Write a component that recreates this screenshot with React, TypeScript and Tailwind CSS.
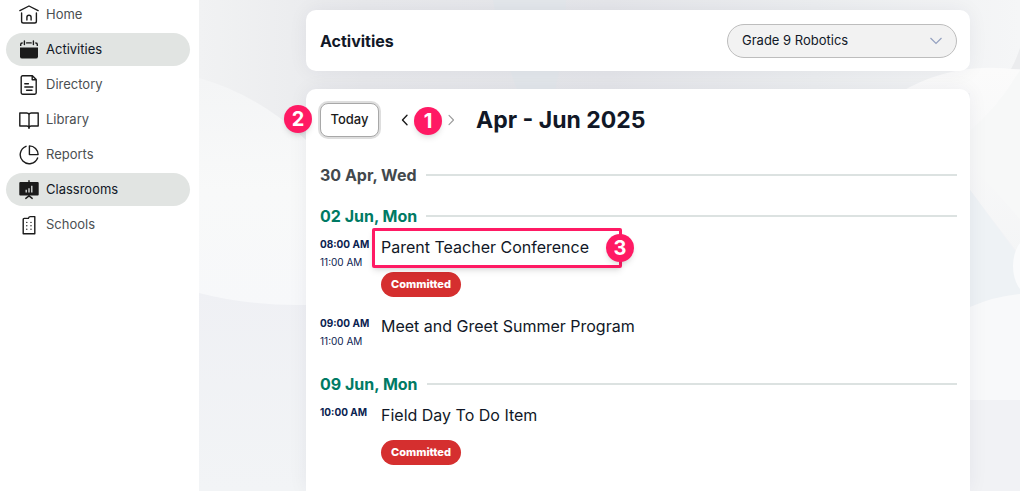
import type { ReactNode } from "react";

type NavItem = { label: string; active?: boolean; icon: ReactNode };
type Event = { start: string; end?: string; title: string; status?: string; marker?: string };
type Day = { date: string; upcoming?: boolean; events: Event[] };

const stroke = {
  fill: "none",
  stroke: "currentColor",
  strokeWidth: 1.4,
  strokeLinecap: "round" as const,
  strokeLinejoin: "round" as const,
};

function Glyph({ children }: { children: ReactNode }) {
  return (
    <svg viewBox="0 0 20 20" className="size-5 shrink-0 text-[#1b1b1b]" aria-hidden="true" {...stroke}>
      {children}
    </svg>
  );
}

const nav: NavItem[] = [
  {
    label: "Home",
    icon: (
      <Glyph>
        <path d="M.9 5.600 10 1l9.100 4.600M2.600 8v8.200A1.800 1.800 0 0 0 4.400 18h11.200a1.800 1.800 0 0 0 1.800-1.800V8M7.900 15v-2.600a2.100 2.100 0 0 1 4.200 0V15" />
      </Glyph>
    ),
  },
  {
    label: "Activities",
    active: true,
    icon: (
      <Glyph>
        <path d="M1 7.400h18v9a2.200 2.200 0 0 1-2.200 2.200H3.200A2.200 2.200 0 0 1 1 16.400z" fill="currentColor" stroke="none" />
        <path d="M1.700 5.400V4.600c0-1 .6-1.600 1.500-1.600M18.300 5.400V4.600c0-1-.6-1.600-1.500-1.600M5.400 1v3.600M14.400 1v3.600M7.600 2.900h4.600" />
      </Glyph>
    ),
  },
  {
    label: "Directory",
    icon: (
      <Glyph>
        <path d="M13.400.8H3.600a1.400 1.400 0 0 0-1.400 1.400v15.600a1.400 1.400 0 0 0 1.400 1.400h12.200a1.400 1.400 0 0 0 1.400-1.400V4.600zM13.200 1v3.800h3.900M5.800 8.800h3.600M5.800 12h8M7.600 15.200h5.400" />
      </Glyph>
    ),
  },
  {
    label: "Library",
    icon: (
      <Glyph>
        <path d="M10 4.400C9.600 3.400 8.800 3 7.800 3H.8v13h7c1.200 0 2 .5 2.200 1.800.2-1.300 1-1.800 2.200-1.800h7V3h-7c-1 0-1.800.4-2.200 1.400zM10 4.400v14" />
      </Glyph>
    ),
  },
  {
    label: "Reports",
    icon: (
      <Glyph>
        <path d="M7 1.300A9 9 0 1 0 18.600 13M10.400.9v8.700h8.700A8.700 8.700 0 0 0 10.400.9z" />
      </Glyph>
    ),
  },
  {
    label: "Classrooms",
    active: true,
    icon: (
      <Glyph>
        <rect x="0.300" y="2" width="19.400" height="13.600" rx="1" fill="currentColor" stroke="none" />
        <path d="M10 .8v2M10 15v1.400M6.800 18.400 10 15.900l3.200 2.500" />
        <path d="M7.200 12.400V9.800M10 12.400V8.200M12.800 12.400V5.800" stroke="#e1e4e2" strokeWidth="1.300" strokeLinecap="butt" />
      </Glyph>
    ),
  },
  {
    label: "Schools",
    icon: (
      <Glyph>
        <path d="M4.200 18.800V4.400c0-.6.400-1 1-1h4.200c.3-1.200 1-1.800 2-1.800h4.400v17.200z" />
        <path d="M7.800 7.400h.01M12 7.400h.01M7.800 10.800h.01M12 10.800h.01M7.800 14.200h.01M12 14.200h.01" />
      </Glyph>
    ),
  },
];

const days: Day[] = [
  { date: "30 Apr, Wed", events: [] },
  {
    date: "02 Jun, Mon",
    upcoming: true,
    events: [
      { start: "08:00 AM", end: "11:00 AM", title: "Parent Teacher Conference", status: "Committed", marker: "3" },
      { start: "09:00 AM", end: "11:00 AM", title: "Meet and Greet Summer Program" },
    ],
  },
  {
    date: "09 Jun, Mon",
    upcoming: true,
    events: [{ start: "10:00 AM", title: "Field Day To Do Item", status: "Committed" }],
  },
];

function Marker({ children, className }: { children: ReactNode; className: string }) {
  return (
    <span
      className={`absolute z-10 flex size-7 items-center justify-center rounded-full bg-[#ff1a64] text-xl font-bold text-white shadow-md ${className}`}
    >
      {children}
    </span>
  );
}

function Backdrop() {
  return (
    <svg
      className="absolute inset-0 size-full"
      viewBox="0 0 821 491"
      preserveAspectRatio="none"
      aria-hidden="true"
    >
      <defs>
        <linearGradient id="base" x1="0" y1="0" x2="1" y2="0">
          <stop offset="0" stopColor="#f1f2f3" />
          <stop offset="0.200" stopColor="#e8e9ec" />
          <stop offset="0.500" stopColor="#e5e6ea" />
          <stop offset="0.750" stopColor="#eceef0" />
          <stop offset="1" stopColor="#f5f6f7" />
        </linearGradient>
        <linearGradient id="left" x1="0" y1="0" x2="0" y2="1">
          <stop offset="0" stopColor="#f4f5f6" />
          <stop offset="0.500" stopColor="#f8f9f9" />
          <stop offset="1" stopColor="#f7f8fa" />
        </linearGradient>
        <linearGradient id="lower" x1="0" y1="0" x2="0" y2="1">
          <stop offset="0" stopColor="#eff0f4" />
          <stop offset="1" stopColor="#f2f4f6" />
        </linearGradient>
        <linearGradient id="dome" x1="0" y1="0" x2="0" y2="1">
          <stop offset="0" stopColor="#fbfbfb" />
          <stop offset="1" stopColor="#f4f5f6" />
        </linearGradient>
      </defs>
      <rect width="821" height="491" fill="url(#base)" />
      <path d="M294 0q8 50 28 100h32q12-50 13-100z" fill="#e3e7eb" />
      <path d="M0 280h150v211H0z" fill="url(#lower)" />
      <path d="M0 78Q60 95 107 140V305Q50 306 0 293z" fill="url(#left)" />
      <path d="M771 90h50v401h-50z" fill="#f1f2f5" />
      <path d="M821 48q-4 12-9 21h9z" fill="#ebecee" />
      <path d="M700 93Q755 60 821 70v186l-50-66V93z" fill="url(#dome)" />
      <path d="M821 70Q800 106 771 131v32l50 56z" fill="#f7f8f8" />
      <path d="M771 190 821 258v36q-25 2-50 13z" fill="#eef2f5" />
      <path d="M771 307q25-11 50-13v106h-50z" fill="#f8f9fa" />
      <ellipse cx="832" cy="266" rx="18" ry="29" fill="#fafbfc" />
    </svg>
  );
}

function EventRow({ event }: { event: Event }) {
  return (
    <li className="flex">
      <div className="w-[61px] shrink-0 text-[10px] leading-[18px] whitespace-nowrap text-[#0b2250]">
        <p className="font-bold">{event.start}</p>
        {event.end && <p>{event.end}</p>}
      </div>
      <div>
        <h3 className="relative w-fit text-base leading-6 text-[#111827]">
          <a href="#event">{event.title}</a>
          {event.marker && (
            <>
              <span className="pointer-events-none absolute -top-[7px] -left-[9px] h-10 w-[250px] rounded-xs border-3 border-[#ff1a64] shadow-md" />
              <Marker className="-top-[1px] left-[225px]">{event.marker}</Marker>
            </>
          )}
        </h3>
        {event.status && (
          <span className="mt-[13px] flex h-[25px] w-20 items-center justify-center rounded-full bg-[#d52f2f] text-[11px] font-extrabold text-white">
            {event.status}
          </span>
        )}
      </div>
    </li>
  );
}

export default function App() {
  return (
    <div className="flex min-h-screen overflow-hidden bg-white font-['Inter',sans-serif]">
      <nav aria-label="Main" className="-mt-[2px] w-[199px] shrink-0 pr-[9px] pl-[6px]">
        <ul className="flex flex-col gap-[2px]">
          {nav.map((item) => (
            <li key={item.label}>
              <a
                href={`#${item.label.toLowerCase()}`}
                className={`flex h-[33px] items-center gap-[7px] rounded-full pl-[13px] text-[13px] ${
                  item.active ? "bg-[#e1e4e2] text-[#111827]" : "text-[#4b4f52]"
                }`}
              >
                {item.icon}
                {item.label}
              </a>
            </li>
          ))}
        </ul>
      </nav>

      <main className="relative flex flex-1 flex-col gap-[18px] pt-[10px] pr-[50px] pl-[107px]">
        <Backdrop />
        <header className="relative flex h-[61px] items-center justify-between rounded-[10px] bg-white pr-[13px] pl-[14px] shadow-[0_0_20px_rgba(30,40,60,0.06)]">
          <h1 className="text-base font-bold text-[#111827]">Activities</h1>
          <div className="relative w-[230px]">
            <select
              aria-label="Class"
              className="h-[34px] w-full appearance-none rounded-full border border-[#bdbdbd] bg-[#f2f2f2] px-[14px] text-[13px] text-[#111827]"
            >
              <option>Grade 9 Robotics</option>
            </select>
            <svg
              viewBox="0 0 12 8"
              className="pointer-events-none absolute top-[13px] right-[15px] h-2 w-3"
              fill="none"
              stroke="#94a1c0"
              strokeWidth="1.200"
              aria-hidden="true"
            >
              <path d="m.5 1 5.500 5.500L11.500 1" />
            </svg>
          </div>
        </header>

        <section className="relative flex-1 rounded-t-[10px] bg-white pt-[14px] pr-[13px] pl-[14px] shadow-[0_0_20px_rgba(30,40,60,0.06)]">
          <Marker className="top-[16px] -left-[22px]">2</Marker>
          <div className="flex h-[34px] items-center">
            <button
              type="button"
              className="h-[34px] w-[59px] rounded-lg border border-[#a8a8a8] bg-white text-[13px] font-medium text-[#1b1b1b] ring-2 ring-[#dedede]"
            >
              Today
            </button>
            <div className="relative ml-[22px] flex items-center gap-[38px]">
              <button type="button" aria-label="Previous" className="text-[#1b1b1b]">
                <svg viewBox="0 0 8 12" className="h-3 w-2" {...stroke} aria-hidden="true">
                  <path d="M6 1.300 1.500 6 6 10.700" />
                </svg>
              </button>
              <button type="button" aria-label="Next" className="text-[#9b9b9b]">
                <svg viewBox="0 0 8 12" className="h-3 w-2" {...stroke} strokeWidth="1.100" aria-hidden="true">
                  <path d="M2 1.300 6.500 6 2 10.700" />
                </svg>
              </button>
              <Marker className="-top-[7px] left-[13px]">1</Marker>
            </div>
            <h2 className="ml-[21px] text-[23px] leading-8 font-bold text-[#111827]">Apr - Jun 2025</h2>
          </div>

          <div className="mt-[26px] flex flex-col gap-[17px]">
            {days.map((day) => (
              <section key={day.date}>
                <div className="flex h-6 items-center gap-[9px]">
                  <h3 className={`text-base font-bold ${day.upcoming ? "text-[#007a64]" : "text-[#43484c]"}`}>
                    {day.date}
                  </h3>
                  <div className="h-[2px] flex-1 bg-[#dce2e1]" />
                </div>
                {day.events.length > 0 && (
                  <ul className="flex flex-col gap-[17px] pt-[7px] pb-[5px]">
                    {day.events.map((event) => (
                      <EventRow key={event.title} event={event} />
                    ))}
                  </ul>
                )}
              </section>
            ))}
          </div>
        </section>
      </main>
    </div>
  );
}
